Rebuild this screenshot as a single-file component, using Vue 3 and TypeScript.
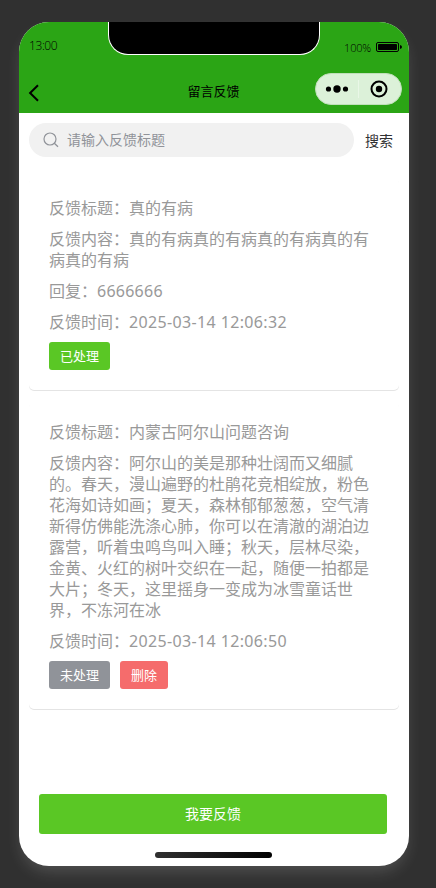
<script setup lang="ts">
import { ref } from 'vue'

interface Feedback {
  id: number
  title: string
  content: string
  reply?: string
  time: string
  handled: boolean
}

const keyword = ref('')
const items = ref<Feedback[]>([
  {
    id: 1,
    title: '真的有病',
    content: '真的有病真的有病真的有病真的有病真的有病',
    reply: '6666666',
    time: '2025-03-14 12:06:32',
    handled: true,
  },
  {
    id: 2,
    title: '内蒙古阿尔山问题咨询',
    content:
      '阿尔山的美是那种壮阔而又细腻的。春天，漫山遍野的杜鹃花竞相绽放，粉色花海如诗如画；夏天，森林郁郁葱葱，空气清新得仿佛能洗涤心肺，你可以在清澈的湖泊边露营，听着虫鸣鸟叫入睡；秋天，层林尽染，金黄、火红的树叶交织在一起，随便一拍都是大片；冬天，这里摇身一变成为冰雪童话世界，不冻河在冰',
    time: '2025-03-14 12:06:50',
    handled: false,
  },
])

function remove(id: number): void {
  items.value = items.value.filter((item) => item.id !== id)
}
</script>

<template>
  <div class="stage">
    <div class="phone">
      <div class="notch"></div>
      <header class="header">
        <div class="status">
          <span class="clock">13:00</span>
          <span class="power">
            <span class="percent">100%</span>
            <svg class="battery" width="26" height="10" viewBox="0 0 26 10">
              <rect x="0.5" y="0.5" width="22" height="9" rx="1.5" fill="none" stroke="#000" />
              <rect x="2" y="2" width="19" height="6" rx="0.8" fill="#000" />
              <path d="M24 3v4q2-.7 2-2t-2-2z" fill="#000" />
            </svg>
          </span>
        </div>
        <div class="nav">
          <svg class="back" width="12" height="18" viewBox="0 0 12 18">
            <path d="M10 1.2 2.100 9l7.900 7.800" fill="none" stroke="#000" stroke-width="2" />
          </svg>
          <h1 class="heading">留言反馈</h1>
          <div class="capsule">
            <svg width="24" height="10" viewBox="0 0 24 10">
              <circle cx="3.500" cy="5" r="2.600" />
              <circle cx="12" cy="5" r="3.700" />
              <circle cx="20.500" cy="5" r="2.600" />
            </svg>
            <span class="split"></span>
            <svg width="18" height="18" viewBox="0 0 18 18">
              <circle cx="9" cy="9" r="7.500" fill="none" stroke="#000" stroke-width="2" />
              <circle cx="9" cy="9" r="3.200" />
            </svg>
          </div>
        </div>
      </header>

      <div class="search">
        <label class="field">
          <svg width="16" height="16" viewBox="0 0 16 16">
            <circle cx="7" cy="7" r="6" fill="none" stroke="#909399" stroke-width="1.200" />
            <path d="m11.300 11.300 3.700 3.500" stroke="#909399" stroke-width="1.300" />
          </svg>
          <input v-model="keyword" type="text" placeholder="请输入反馈标题" />
        </label>
        <span class="go">搜索</span>
      </div>

      <main class="list">
        <article v-for="item in items" :key="item.id" class="card">
          <p>反馈标题：{{ item.title }}</p>
          <p>反馈内容：{{ item.content }}</p>
          <p v-if="item.reply">回复：<span class="num">{{ item.reply }}</span></p>
          <p>反馈时间：<span class="time">{{ item.time }}</span></p>
          <div class="actions">
            <button class="tag" :class="item.handled ? 'done' : 'pending'">
              {{ item.handled ? '已处理' : '未处理' }}
            </button>
            <button v-if="!item.handled" class="tag delete" @click="remove(item.id)">删除</button>
          </div>
        </article>
      </main>

      <footer class="footer">
        <button class="submit">我要反馈</button>
        <div class="home"></div>
      </footer>
    </div>
  </div>
</template>

<style>
body {
  background: #303030;
}
</style>

<style scoped>
.stage {
  box-sizing: border-box;
  height: 888px;
  padding: 22px 27px 22px 19px;
  overflow: hidden;
  background: #303030;
  font-family: 'Noto Sans', 'Noto Sans CJK SC', sans-serif;
}

.phone {
  position: relative;
  display: flex;
  flex-direction: column;
  height: 844px;
  border-radius: 30px;
  background: #fff;
  box-shadow: 0 8px 16px -3px rgba(255, 255, 255, 0.17);
}

.notch {
  position: absolute;
  top: 0;
  left: 89px;
  box-sizing: border-box;
  width: 212px;
  height: 33px;
  border: 1px solid #fff;
  border-top: 0;
  border-radius: 0 0 20px 20px;
  background: #000;
}

.header {
  flex: none;
  display: flex;
  flex-direction: column;
  height: 91px;
  border-radius: 30px 30px 0 0;
  background: #2ba515;
  color: #000;
}

.status {
  display: flex;
  justify-content: space-between;
  align-items: center;
  height: 48px;
  padding: 0 7px 0 10px;
  font-family: 'Open Sans', 'Noto Sans', sans-serif;
  font-weight: 300;
}

.clock {
  margin-top: -1px;
  font-size: 12px;
  letter-spacing: -0.4px;
}

.power {
  display: flex;
  align-items: center;
  gap: 5px;
  padding-top: 2px;
}

.percent {
  padding-top: 2px;
  font-size: 11px;
  line-height: 12px;
  letter-spacing: -0.2px;
}

.nav {
  display: grid;
  grid-template-columns: 1fr auto 1fr;
  align-items: center;
  height: 38px;
  padding: 0 7px 0 9px;
}

.back {
  margin-top: 7px;
}

.heading {
  margin: 3px 3px 0 0;
  font-size: 13px;
  font-weight: 400;
  line-height: 18px;
}

.capsule {
  justify-self: end;
  display: flex;
  align-items: center;
  box-sizing: border-box;
  width: 87px;
  height: 32px;
  padding-left: 9px;
  border: 1px solid #c0dfba;
  border-radius: 16px;
  background: #dcf1d9;
}

.split {
  width: 1px;
  height: 18px;
  margin: 0 11px 0 9px;
  background: #e9f7e7;
}

.search {
  display: flex;
  align-items: center;
  height: 34px;
  margin: 10px 16px 0 10px;
}

.field {
  display: flex;
  align-items: center;
  gap: 8px;
  box-sizing: border-box;
  width: 325px;
  height: 34px;
  padding: 0 14px;
  border-radius: 17px;
  background: #f1f1f1;
}

.field input {
  flex: 1;
  min-width: 0;
  margin-top: -1px;
  padding: 0;
  border: 0;
  outline: 0;
  background: transparent;
  color: #303133;
  font: inherit;
  font-size: 14px;
}

.field input::placeholder {
  color: #909399;
}

.go {
  padding-left: 11px;
  color: #303133;
  font-size: 14px;
}

.list {
  flex: 1;
  display: flex;
  flex-direction: column;
  gap: 12px;
  padding: 21px 10px 0;
}

.card {
  padding: 20px;
  border-radius: 5px;
  box-shadow: 0 1px 0 #e4e4e4;
  color: #999;
  font-size: 16px;
  line-height: 21px;
}

.card p {
  margin: 0 0 10px;
}

.num {
  letter-spacing: 0.25px;
}

.time {
  letter-spacing: 0.36px;
}

.actions {
  display: flex;
  gap: 10px;
  margin-top: -1px;
}

.tag {
  height: 28px;
  padding: 0 11px;
  border: 0;
  border-radius: 3px;
  color: #fff;
  font: inherit;
  font-size: 13px;
  line-height: 28px;
}

.done {
  background: #5ac725;
}

.pending {
  background: #909399;
}

.delete {
  background: #f56c6c;
}

.footer {
  display: flex;
  flex-direction: column;
  padding: 0 22px 8px 20px;
}

.submit {
  height: 40px;
  padding: 0 0 2px;
  border: 0;
  border-radius: 3px;
  background: #5ac725;
  color: #fff;
  font: inherit;
  font-size: 14px;
}

.home {
  align-self: center;
  width: 117px;
  height: 6px;
  margin-top: 18px;
  border-radius: 3px;
  background: linear-gradient(90deg, #303030, #000);
}
</style>
